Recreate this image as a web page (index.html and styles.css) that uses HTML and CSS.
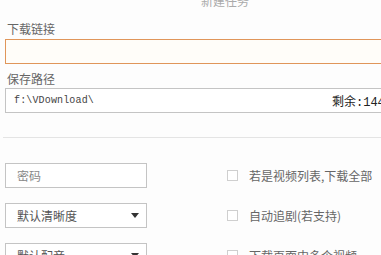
FILE: index.html
```
<html lang="zh-CN">
<head>
    <meta charset="UTF-8">
    <meta name="viewport" content="width=device-width, initial-scale=1.0">
    <title>新建任务</title>
    <link rel="stylesheet" href="styles.css">
</head>
<body>
    <div class="dialog">
        <div class="title">新建任务</div>

        <div class="field-label first">下载链接</div>
        <div class="text-box url-box"></div>

        <div class="field-label">保存路径</div>
        <div class="text-box path-box">
            <span class="path">f:\VDownload\</span>
            <span class="space-left">剩余:144</span>
        </div>

        <div class="divider"></div>

        <div class="options">
            <div class="row">
                <div class="text-box small-box placeholder">密码</div>
                <label class="check"><span class="box"></span>若是视频列表,下载全部</label>
            </div>
            <div class="row">
                <div class="text-box small-box select">默认清晰度<span class="arrow"></span></div>
                <label class="check"><span class="box"></span>自动追剧(若支持)</label>
            </div>
            <div class="row">
                <div class="text-box small-box select">默认配音<span class="arrow"></span></div>
                <label class="check"><span class="box"></span>下载页面中多个视频</label>
            </div>
        </div>
    </div>
</body>
</html>
```

FILE: styles.css
```
body {
    margin: 0;
    background-color: #fdfdfd;
    font-family: "Noto Sans CJK SC", "Noto Sans", sans-serif;
    font-size: 12px;
    overflow: hidden;
}

.dialog {
    width: 400px;
    padding-left: 5px;
}

.title {
    margin-top: -6px;
    height: 14px;
    line-height: 14px;
    text-align: center;
    color: #aaa;
    padding-left: 40px;
}

.field-label {
    height: 16px;
    line-height: 16px;
    margin-top: 7px;
    margin-bottom: 1px;
    padding-left: 2px;
    color: #666;
}

.field-label.first {
    margin-top: 13px;
    margin-bottom: 2px;
}

.text-box {
    box-sizing: border-box;
    height: 25px;
    border: 1px solid #c4c4c4;
    background-color: #fff;
    display: flex;
    align-items: center;
}

.url-box {
    border-color: #e0965a;
    background-color: #fffdf9;
}

.path-box {
    padding-left: 8px;
    padding-right: 12px;
    justify-content: space-between;
}

.path {
    font-family: "Liberation Mono", monospace;
    font-size: 10px;
    letter-spacing: 0.15px;
    color: #444;
}

.space-left {
    width: 60px;
    font-family: "Liberation Mono", "Noto Sans CJK SC", monospace;
    font-size: 12px;
    color: #222;
    white-space: nowrap;
}

.divider {
    height: 1px;
    margin-top: 24px;
    margin-left: -2px;
    background-color: #e4e4e4;
}

.options {
    margin-top: 25px;
    display: flex;
    flex-direction: column;
    gap: 15px;
}

.row {
    display: flex;
    align-items: center;
}

.small-box {
    width: 142px;
    flex-shrink: 0;
    padding-left: 11px;
}

.placeholder {
    color: #888;
}

.select {
    justify-content: space-between;
    padding-right: 7px;
    color: #555;
}

.arrow {
    width: 0;
    height: 0;
    border-left: 4px solid transparent;
    border-right: 4px solid transparent;
    border-top: 5px solid #333;
}

.check {
    margin-left: 80px;
    display: flex;
    align-items: center;
    color: #666;
    white-space: nowrap;
}

.box {
    box-sizing: border-box;
    width: 11px;
    height: 11px;
    border: 1px solid #cfcfcf;
    background-color: #fff;
    margin-right: 11px;
}
```
